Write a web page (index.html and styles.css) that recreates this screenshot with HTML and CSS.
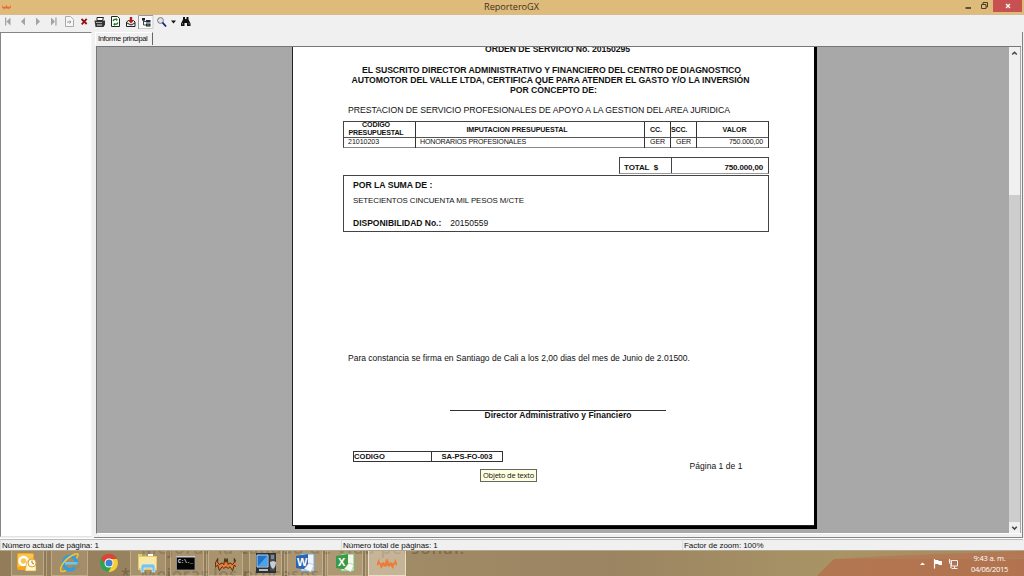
FILE: index.html
```html
<!DOCTYPE html>
<html lang="es">
<head>
<meta charset="utf-8">
<title>ReporteroGX</title>
<link rel="stylesheet" href="styles.css">
</head>
<body>
<svg class="defs" width="0" height="0">
  <symbol id="gx" viewBox="0 0 20 12"><path d="M0 9Q0 4 2.500 1 1.500 5 4 6.500L6.500 5 8 6.500 9 1l1 3.500L11 1l1 5.500L13.500 5 16 6.500Q18.500 5 17.500 1 20 4 20 9l-2.500-2-1.500 5-2.500-3.500L12 10l-2-1.500L8 10 6.500 8.500 4 12 2.500 7Z"/></symbol>
</svg>
<div class="desktop">
  <header class="titlebar">
    <svg class="appicon" viewBox="0 0 20 12"><use href="#gx"/></svg>
    <span class="title">ReporteroGX</span>
    <svg class="winbtns" width="62" height="15" viewBox="0 0 62 15">
      <path d="M4.500 8h5.500" stroke="#2b2414" stroke-width="1.400"/>
      <path d="M20.500 4.500h4.500v4h-4.500zM22 4V2.500h4.500V7H25" fill="none" stroke="#4a3e26"/>
      <path fill="#c75050" d="M32 0h29v12H32z"/>
      <path d="M45 4l4 4m0-4l-4 4" stroke="#fff" stroke-width="1.300"/>
    </svg>
  </header>
  <div class="toolbar">
    <svg width="200" height="17" viewBox="0 15 200 17">
      <g fill="#a3a3a3"><path d="M5 17.500h1.300v8H5zM10.500 17.500v8L6.500 21.500zM25 17.500v8l-4-4zM36 17.500v8l4-4zM51 17.500v8l4-4zM55.300 17.500h1.300v8h-1.300z"/></g>
      <path d="M65.500 16.500h5l3 3v7h-8z" fill="#f6f6f6" stroke="#aaa"/><path d="M67 22h4m-1.500-1.500L71 22l-1.500 1.500" stroke="#999" fill="none"/>
      <path d="M81.500 19l5.200 5m0-5.200l-5 5.500" stroke="#8d1515" stroke-width="1.800"/>
      <path d="M97 17.500h6.500l-1 3H97z" fill="#fff" stroke="#222"/><path d="M94.500 20.500h10.500v4l-1.500 2.500h-8z" fill="#333"/><path d="M96 22.500h6" stroke="#aaa"/><path d="M97 25h5" stroke="#ddd"/>
      <path d="M111.500 16.500h6l2 2v8h-8z" fill="#fff" stroke="#222"/><path d="M113 21q1-2.500 4-1.500M118 22.500q-1 2.500-4 1.500" stroke="#168216" stroke-width="1.300" fill="none"/><path d="M116 18l2 2-2 1zM115 23l-2 1 2 2z" fill="#168216"/>
      <path d="M126.500 22l2-1.500h5l1.500 1.500v4.500h-8.500z" fill="#eee" stroke="#222"/><path d="M127 23l4 2 4-2" stroke="#222" fill="none"/><path d="M129.800 17h2.400v3h2l-3.200 3.500-3.200-3.500h2z" fill="#a91d1d"/>
      <path d="M138.500 15.500h14.500v13h-14.500z" fill="#f8f8f8" stroke="#ccc"/><path d="M138.500 29v-13.500h14.500" stroke="#999" fill="none"/>
      <path d="M142 18h3v2.500h-3z" fill="#222"/><path d="M146 20h4.500v2.500H146z" fill="#182850"/><path d="M146 23.500h4.500v3H146z" fill="#222"/><path d="M143.500 20v5h3M143.500 21.500h3" stroke="#444" fill="none"/><path d="M147 24.500h2.500v1H147z" fill="#4a7"/>
      <circle cx="160.500" cy="20.500" r="2.900" fill="#dfe6ee" stroke="#777"/><path d="M162.500 22.500l3.500 4" stroke="#141e86" stroke-width="1.800"/>
      <path d="M171 20.500h5l-2.500 3z" fill="#111"/>
      <path d="M183 17h2v2h1.500v-2h2v2.500l2 4V26h-3.500v-3h-2.500v3H181v-2.500l2-4z" fill="#111"/><path d="M182.500 23v1.500M189 23v1.500" stroke="#aaa" stroke-width=".7"/>
    </svg>
  </div>
  <main class="work">
    <aside class="tree"></aside>
    <section class="viewer">
      <div class="tabs"><div class="tab">Informe principal</div></div>
      <div class="frame">
        <div class="canvas">
          <article class="sheet">
            <h1 class="order">ORDEN DE SERVICIO No. 20150295</h1>
            <div class="cert">
              <div>EL SUSCRITO DIRECTOR ADMINISTRATIVO Y FINANCIERO DEL CENTRO DE DIAGNOSTICO</div>
              <div class="wide">AUTOMOTOR DEL VALLE LTDA, CERTIFICA QUE PARA ATENDER EL GASTO Y/O LA INVERSIÓN</div>
              <div class="por">POR CONCEPTO DE:</div>
            </div>
            <div class="concept">PRESTACION DE SERVICIO PROFESIONALES DE APOYO A LA GESTION DEL AREA JURIDICA</div>
            <div class="grid">
              <div class="head two"><span>CODIGO</span><span>PRESUPUESTAL</span></div>
              <div class="head pad">IMPUTACION PRESUPUESTAL</div>
              <div class="head cc">CC.</div>
              <div class="head left">SCC.</div>
              <div class="head val">VALOR</div>
              <div class="cell code">21010203</div>
              <div class="cell name">HONORARIOS PROFESIONALES</div>
              <div class="cell mid">GER</div>
              <div class="cell mid">GER</div>
              <div class="cell num">750.000,00</div>
            </div>
            <div class="total">
              <div class="tlabel">TOTAL&nbsp; $</div>
              <div class="tvalue">750.000,00</div>
            </div>
            <div class="sum">
              <div class="s1">POR LA SUMA DE :</div>
              <div class="s2">SETECIENTOS CINCUENTA MIL PESOS M/CTE</div>
              <div class="s3"><b>DISPONIBILIDAD No.:</b><span>20150559</span></div>
            </div>
            <div class="record">Para constancia se firma en Santiago de Cali a los 2,00 dias del mes de Junio de 2.01500.</div>
            <div class="sign">Director Administrativo y Financiero</div>
            <div class="foot">
              <div class="form"><div class="f1">CODIGO</div><div class="f2">SA-PS-FO-003</div></div>
              <div class="pageno">Página 1 de 1</div>
            </div>
            <div class="tip">Objeto de texto</div>
          </article>
        </div>
        <div class="scroll">
          <svg width="11" height="11" viewBox="0 0 11 11"><path d="M3.200 7.500L5.500 5.200l2.300 2.300" fill="none" stroke="#444" stroke-width="1.500"/></svg>
          <div class="thumb"></div>
          <svg width="11" height="11" viewBox="0 0 11 11"><path d="M3.200 4.800l2.300 2.300 2.300-2.300" fill="none" stroke="#444" stroke-width="1.500"/></svg>
        </div>
      </div>
    </section>
  </main>
  <footer class="status">
    <div>Número actual de página: 1</div>
    <div>Número total de páginas: 1</div>
    <div>Factor de zoom: 100%</div>
  </footer>
  <nav class="taskbar">
    <div class="ghost g1">Mejorar la calidad de vida personal.</div>
    <div class="ghost g2">*&nbsp; Mejorar los procesos</div>
    <svg class="wall" width="208" height="26" viewBox="816 550 208 26"><path d="M834 558h190v18H816z" fill="#b56c49" opacity=".75"/><path d="M890 555l134-5v7l-60 1H834z" fill="#bd6948" opacity=".5"/></svg>
    <div class="apps">
      <div class="app stack w1"><svg width="22" height="22" viewBox="0 0 22 22"><rect x="1" y="1" width="17" height="17" rx="2" fill="#f4a51c"/><path d="M2 2h15v8L2 15z" fill="#fbc64f"/><circle cx="7.500" cy="9" r="4" fill="none" stroke="#fff" stroke-width="2.500"/><path d="M11 9h9v10H9z" fill="#fff5cf" stroke="#d39a2d" stroke-width=".6"/><circle cx="16" cy="11" r="4" fill="#fffbe6" stroke="#dba33a"/><path d="M16 8.500V11l2 1" stroke="#b77b20" fill="none"/></svg></div>
      <div class="app w2"><svg width="22" height="22" viewBox="0 0 22 22"><ellipse cx="11" cy="11" rx="6.500" ry="6.800" fill="none" stroke="#2f9fdc" stroke-width="3.400"/><path d="M12 12.500h9v3.500h-5z" fill="#9d8a66"/><path d="M6 10h12.500v2.600H6z" fill="#6cc6ee"/><path d="M17.500 6.500q4-6.500-2.500-4Q7 6 2.500 14q-3 8 4.500 4.500" fill="none" stroke="#f3c33e" stroke-width="1.500"/></svg></div>
      <div class="app bare w3"><svg width="20" height="20" viewBox="0 0 20 20"><circle cx="10" cy="10" r="9" fill="#2fa354"/><path d="M2.200 5.500A9 9 0 0 1 18 6H10L6 11z" fill="#df4335"/><path d="M18 6a9 9 0 0 1-8.500 13L14 11l-2-5z" fill="#fccd32"/><circle cx="10" cy="10" r="4.500" fill="#fff"/><circle cx="10" cy="10" r="3.500" fill="#3b82d0"/></svg></div>
      <div class="app w4"><svg width="22" height="22" viewBox="0 0 22 22"><path d="M1 2h7l1 2h11v14H1z" fill="#e8c866"/><path d="M2 5h17v11H2z" fill="#f9e9a6"/><path d="M5 3h3" stroke="#3a9a45"/><path d="M11 3h5" stroke="#fff" stroke-width="2"/><path d="M4 20v-6q0-2 2-2h10q2 0 2 2v6h-3v-4H7v4z" fill="#7cc3e8" stroke="#d7f1fb" stroke-width=".7"/></svg></div>
      <div class="app stack w5"><svg width="22" height="20" viewBox="0 0 22 20"><path d="M1.500 3h18.500v14H1.500z" fill="#050505" stroke="#999" stroke-width=".8"/><path d="M1.500 3h18.500v1.500H1.500z" fill="#ccc"/><text x="3" y="9.500" class="dos">C:\._</text></svg></div>
      <div class="app w6"><svg class="gx dark" width="22" height="16" viewBox="-1 -1 22 14"><use href="#gx"/></svg></div>
      <div class="app stack w7"><svg width="22" height="22" viewBox="0 0 22 22"><path d="M1 1h20v20H1z" fill="#2b3037"/><path d="M2 3h11v12H2z" fill="#1c73c9" stroke="#c2d4e3"/><path d="M3 14L12 4v10z" fill="#49a4ea"/><path d="M15 2h5v17h-5z" fill="#444b53"/><path d="M16 4h3m-3 2h3" stroke="#b9c2ca"/><path d="M15 10l3-1 3 1q0 5-3 7-3-2-3-7z" fill="#c8cdd2"/><path d="M4 18h9" stroke="#b5bec5" stroke-width="2"/></svg></div>
      <div class="app stack w8"><svg width="20" height="20" viewBox="0 0 20 20"><path d="M6 1h13v17H6z" fill="#eef4fb" stroke="#7ca6d4"/><path d="M1 3l12-2v16L1 15z" fill="#2c63b2"/><text x="2" y="13" class="letter">W</text><path d="M14 10l5 2-3 7-7-3z" fill="#f5f9fd" stroke="#97b5d6" stroke-width=".6"/></svg></div>
      <div class="app stack w9"><svg width="20" height="20" viewBox="0 0 20 20"><path d="M6 1h13v17H6z" fill="#eff8ec" stroke="#7bb974"/><path d="M1 3l12-2v16L1 15z" fill="#3a9a45"/><text x="3" y="13" class="letter">X</text><path d="M14 10l5 2-3 7-7-3z" fill="#f7fbf5" stroke="#8bc184" stroke-width=".6"/></svg></div>
      <div class="app active w10"><svg class="gx" width="20" height="14" viewBox="0 0 20 12"><use href="#gx"/></svg></div>
    </div>
    <div class="tray">
      <svg width="42" height="14" viewBox="0 0 42 14"><path d="M1 8h5L3.500 5.500z" fill="#fff"/><path d="M15.500 2v9.500" stroke="#fff" stroke-width="1.200"/><path d="M16 3h3l1 1h3v4h-3l-1-1h-3z" fill="#fff"/><path d="M32.500 3.500h6v5.500h-6zM35.500 9v2m-3 .5h6" fill="none" stroke="#eee"/><path d="M30.500 2v3q0 1.500 1.500 2v4M30 4h3" fill="none" stroke="#eee" stroke-width="1.200"/></svg>
      <div class="clock"><div>9:43 a. m.</div><div class="date">04/06/2015</div></div>
    </div>
  </nav>
</div>
</body>
</html>
```
FILE: styles.css
```css
* { box-sizing: border-box; }
body { margin: 0; width: 1024px; height: 576px; overflow: hidden; background: #f0f0f0; color: #111; font-family: "Liberation Sans", Arial, sans-serif; font-size: 8px; }
svg { display: block; flex: none; }
.defs { position: absolute; }
.desktop { display: flex; flex-direction: column; height: 576px; white-space: nowrap; }

.titlebar { height: 15px; flex: none; display: flex; align-items: center; background: #debb7b; border-bottom: 1px solid #d6bd8f; }
.appicon { width: 9px; height: 6px; margin-left: 2px; fill: #ee672c; }
.title { flex: 1; padding-left: 473px; font: 9.200px/14px "Open Sans", "Noto Sans", sans-serif; letter-spacing: -.04px; color: #3b321f; }
.winbtns { align-self: flex-start; margin-right: 1px; }
.toolbar { height: 17px; flex: none; }

.work { height: 506px; flex: none; display: flex; }
.tree { width: 92px; height: 505px; background: #fff; border: 1px solid #858585; border-right-color: #f5f5f5; border-bottom-color: #e3e3e3; }
.viewer { width: 929px; margin-left: 2px; border-right: 1px solid #828282; border-bottom: 1px solid #858585; }
.tabs { height: 14px; padding-left: 1px; }
.tab { width: 58px; height: 13px; padding-left: 2px; border-left: 1px solid #fff; border-top: 1px solid #fff; border-right: 1px solid #666; font-size: 7.500px; line-height: 11px; letter-spacing: -.36px; }
.frame { width: 925px; height: 488px; margin-left: 2px; display: flex; border-left: 1px solid #777; border-top: 1px solid #777; border-bottom: 1px solid #fff; background: #a8a8a8; }
.canvas { width: 912px; height: 486px; padding-left: 195px; overflow: hidden; }
.sheet { position: relative; width: 522px; height: 482px; margin-top: -3px; background: #fff; border-left: 1px solid #222; border-bottom: 1px solid #222; box-shadow: 3px 3px 0 #000; }
.scroll { width: 11px; display: flex; flex-direction: column; justify-content: space-between; background: #f0f0f0; }
.thumb { height: 328px; margin-top: 137px; background: #cdcdcd; }

.order { margin: 0; height: 21px; padding-left: 192px; font-size: 8.700px; line-height: 10px; letter-spacing: -.07px; }
.cert { font-weight: bold; font-size: 8.700px; line-height: 10.200px; text-align: center; padding-right: 4px; letter-spacing: -.057px; }
.cert div { height: 10.200px; }
.cert .wide { padding-right: 2px; letter-spacing: -.033px; }
.cert .por { padding-left: 4px; }
.concept { height: 25.400px; padding: 9px 0 0 55px; font-size: 8.700px; line-height: 11px; letter-spacing: -.041px; }
.grid { width: 426px; height: 27px; margin: 0 0 0 50px; display: grid; grid-template-columns: 72px 229px 26px 26px 72px; grid-template-rows: 16px 10px; border: 1px solid #444; border-right: 0; border-bottom-color: #888; font-size: 7.100px; letter-spacing: -.13px; }
.grid > div { border-right: 1px solid #333; }
.head { font-weight: bold; border-bottom: 1px solid #555; display: flex; align-items: center; justify-content: center; padding-top: 1px; }
.two { flex-direction: column; line-height: 8px; padding: 0 7px 0 0; letter-spacing: -.165px; }
.pad { padding-right: 26px; letter-spacing: -.104px; }
.cc { padding-right: 3px; }
.left { justify-content: flex-start; letter-spacing: -.238px; }
.val { padding-left: 4px; letter-spacing: -.063px; }
.cell { line-height: 9px; }
.code, .name { padding-left: 4px; }
.code { letter-spacing: -.07px; }
.name { letter-spacing: -.182px; }
.mid { text-align: center; }
.num { text-align: right; padding-right: 5px; letter-spacing: -.152px; }
.total { width: 150px; height: 17px; margin: 9px 0 1px 326px; display: flex; border: 1px solid #444; border-bottom-color: #999; font-weight: bold; font-size: 8px; line-height: 19px; }
.tlabel { width: 52px; padding-left: 4px; border-right: 1px solid #444; letter-spacing: -.104px; }
.tvalue { flex: 1; text-align: right; padding-right: 5px; letter-spacing: -.15px; }
.sum { width: 426px; height: 57px; margin-left: 50px; padding: 4px 0 0 9px; border: 1px solid #444; line-height: 11px; }
.s1 { font-weight: bold; height: 15px; font-size: 8.700px; letter-spacing: -.04px; }
.s2 { height: 23px; font-size: 7.900px; letter-spacing: -.079px; }
.s3 { display: flex; gap: 9px; font-size: 8.500px; }
.record { margin: 121px 0 0 55px; height: 57px; font-size: 8.500px; line-height: 11px; letter-spacing: .009px; }
.sign { width: 216px; margin-left: 157px; border-top: 1px solid #333; height: 41px; font-weight: bold; font-size: 8.500px; line-height: 9px; text-align: center; letter-spacing: .011px; }
.foot { display: flex; padding-left: 60px; }
.form { display: flex; width: 150px; height: 11px; border: 1px solid #333; font-weight: bold; font-size: 7.600px; line-height: 9px; }
.f1 { width: 78px; border-right: 1px solid #333; }
.f2 { flex: 1; text-align: center; letter-spacing: -.04px; }
.pageno { padding: 10px 0 0 186.500px; font-size: 8.500px; line-height: 11px; letter-spacing: .04px; }
.tip { position: absolute; left: 187px; top: 425px; width: 57px; height: 13px; padding-left: 2px; background: #ffffe1; border: 1px solid #666; font: 7.500px/11px "Open Sans", "Noto Sans", sans-serif; letter-spacing: -.227px; }

.status { height: 12px; flex: none; display: flex; border-top: 1px solid #fff; line-height: 12px; font-size: 8px; letter-spacing: -.05px; }
.status div { width: 341px; height: 11px; padding-left: 1px; border-left: 1px solid #ddd; border-top: 1px solid #bbb; }
.taskbar { position: relative; height: 26px; flex: none; display: flex; justify-content: space-between; overflow: hidden; background: linear-gradient(90deg, #927c59, #a18c68 35%, #9b8461 60%, #a99466 82%, #a88560); border-top: 1px solid #b4a68b; }
.ghost { position: absolute; font: 600 17px/18px "Open Sans", "Noto Sans", sans-serif; color: rgba(65, 50, 25, .36); }
.g1 { left: 141px; top: -12px; letter-spacing: .9px; }
.g2 { left: 121px; top: 14px; letter-spacing: .4px; }
.wall { position: absolute; right: 0; top: 0; }
.apps { position: relative; display: flex; padding-left: 11px; gap: 4px; }
.app { height: 25px; display: flex; align-items: center; justify-content: center; background: rgba(225, 205, 165, .2); border: 1px solid rgba(225, 210, 180, .42); border-top: 0; }
.stack { box-shadow: 2px 0 0 rgba(110, 90, 55, .55), 3px 0 0 rgba(225, 210, 180, .4); }
.bare { background: none; border-color: transparent; }
.active { background: rgba(235, 222, 200, .5); border-color: rgba(250, 240, 220, .7); }
.w1 { width: 33px; padding-right: 2px; margin-right: 3px; }
.w2 { width: 37px; }
.w3 { width: 34px; }
.w4 { width: 36px; }
.w5 { width: 34px; padding-right: 2px; }
.w6 { width: 35px; padding-right: 1px; }
.w7 { width: 33px; margin-left: 2px; }
.w8 { width: 36px; margin-left: 1px; }
.w9 { width: 36px; }
.w10 { width: 38px; margin-left: 1px; }
.gx { fill: #ed7b35; }
.dark { stroke: #332211; stroke-width: .8; }
.letter { font: bold 11px "Liberation Sans", Arial, sans-serif; fill: #fff; }
.dos { font: bold 5px "Liberation Mono", monospace; fill: #fff; }
.tray { position: relative; display: flex; padding-right: 15px; align-items: center; }
.clock { width: 39px; margin-left: 9px; text-align: center; color: #fff; font: 7.500px/10.500px "Open Sans", "Noto Sans", sans-serif; letter-spacing: -.18px; }
.date { letter-spacing: -.281px; }
```
